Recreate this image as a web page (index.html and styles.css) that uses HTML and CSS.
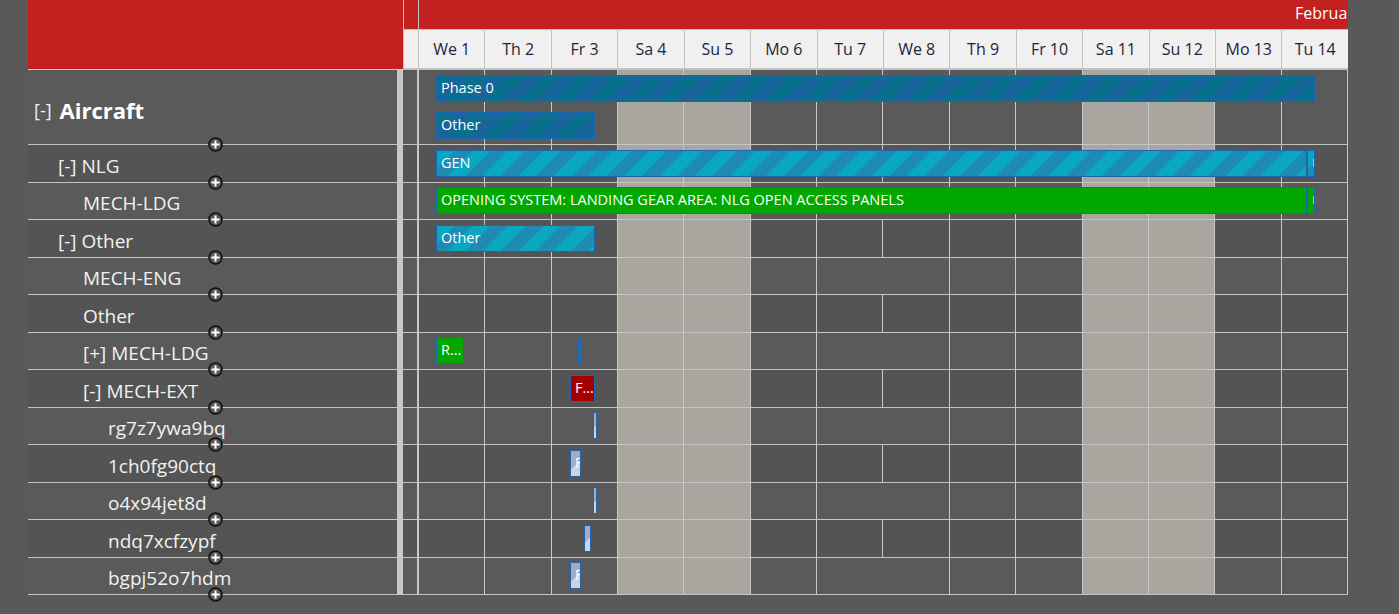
FILE: index.html
```html
<!DOCTYPE html>
<html lang="en">
<head>
<meta charset="utf-8">
<title>Gantt</title>
<link rel="stylesheet" href="styles.css">
</head>
<body>
<div class="gantt">
  <div class="header">
    <div class="hdr-left"></div>
    <div class="hdr-right">
      <div class="month-row">
        <div class="lead"></div>
        <div class="month">February</div>
      </div>
      <div class="day-row">
        <div class="lead"></div>
        <div class="days">
          <div class="day">We 1</div>
          <div class="day">Th 2</div>
          <div class="day">Fr 3</div>
          <div class="day">Sa 4</div>
          <div class="day">Su 5</div>
          <div class="day">Mo 6</div>
          <div class="day">Tu 7</div>
          <div class="day">We 8</div>
          <div class="day">Th 9</div>
          <div class="day">Fr 10</div>
          <div class="day">Sa 11</div>
          <div class="day">Su 12</div>
          <div class="day">Mo 13</div>
          <div class="day">Tu 14</div>
        </div>
      </div>
    </div>
  </div>

  <div class="body">
    <div class="tree">
      <div class="row tall lvl0"><span class="toggle">[-]</span><span class="root-name">Aircraft</span><svg class="add" viewBox="0 0 15 15"><circle cx="7.5" cy="7.5" r="6.5"/><path d="M7.5 3.5v8M3.5 7.5h8"/></svg></div>
      <div class="row alt lvl1">[-] NLG<svg class="add" viewBox="0 0 15 15"><circle cx="7.5" cy="7.5" r="6.5"/><path d="M7.5 3.5v8M3.5 7.5h8"/></svg></div>
      <div class="row lvl2">MECH-LDG<svg class="add" viewBox="0 0 15 15"><circle cx="7.5" cy="7.5" r="6.5"/><path d="M7.5 3.5v8M3.5 7.5h8"/></svg></div>
      <div class="row alt lvl1">[-] Other<svg class="add" viewBox="0 0 15 15"><circle cx="7.5" cy="7.5" r="6.5"/><path d="M7.5 3.5v8M3.5 7.5h8"/></svg></div>
      <div class="row lvl2">MECH-ENG<svg class="add" viewBox="0 0 15 15"><circle cx="7.5" cy="7.5" r="6.5"/><path d="M7.5 3.5v8M3.5 7.5h8"/></svg></div>
      <div class="row alt lvl2">Other<svg class="add" viewBox="0 0 15 15"><circle cx="7.5" cy="7.5" r="6.5"/><path d="M7.5 3.5v8M3.5 7.5h8"/></svg></div>
      <div class="row lvl2">[+] MECH-LDG<svg class="add" viewBox="0 0 15 15"><circle cx="7.5" cy="7.5" r="6.5"/><path d="M7.5 3.5v8M3.5 7.5h8"/></svg></div>
      <div class="row alt lvl2">[-] MECH-EXT<svg class="add" viewBox="0 0 15 15"><circle cx="7.5" cy="7.5" r="6.5"/><path d="M7.5 3.5v8M3.5 7.5h8"/></svg></div>
      <div class="row lvl3">rg7z7ywa9bq<svg class="add" viewBox="0 0 15 15"><circle cx="7.5" cy="7.5" r="6.5"/><path d="M7.5 3.5v8M3.5 7.5h8"/></svg></div>
      <div class="row alt lvl3">1ch0fg90ctq<svg class="add" viewBox="0 0 15 15"><circle cx="7.5" cy="7.5" r="6.5"/><path d="M7.5 3.5v8M3.5 7.5h8"/></svg></div>
      <div class="row lvl3">o4x94jet8d<svg class="add" viewBox="0 0 15 15"><circle cx="7.5" cy="7.5" r="6.5"/><path d="M7.5 3.5v8M3.5 7.5h8"/></svg></div>
      <div class="row alt lvl3">ndq7xcfzypf<svg class="add" viewBox="0 0 15 15"><circle cx="7.5" cy="7.5" r="6.5"/><path d="M7.5 3.5v8M3.5 7.5h8"/></svg></div>
      <div class="row lvl3">bgpj52o7hdm<svg class="add" viewBox="0 0 15 15"><circle cx="7.5" cy="7.5" r="6.5"/><path d="M7.5 3.5v8M3.5 7.5h8"/></svg></div>
    </div>

    <div class="splitter"></div>

    <div class="chart">
      <div class="crow tall">
        <div class="lead"></div><div class="vline"></div>
        <div class="track">
          <div class="bar phase" style="left:17px;width:879px;top:5px">Phase 0</div>
          <div class="bar phase" style="left:17px;width:159px;top:42px">Other</div>
        </div>
      </div>
      <div class="crow alt">
        <div class="lead"></div><div class="vline"></div>
        <div class="track">
          <div class="bar group" style="left:17px;width:871px">GEN</div>
          <div class="bar group tiny" style="left:888px;width:8px"><span class="mark"></span></div>
        </div>
      </div>
      <div class="crow">
        <div class="lead"></div><div class="vline"></div>
        <div class="track">
          <div class="bar green" style="left:17px;width:871px">OPENING SYSTEM: LANDING GEAR AREA: NLG OPEN ACCESS PANELS</div>
          <div class="bar green tiny" style="left:888px;width:8px"><span class="mark"></span></div>
        </div>
      </div>
      <div class="crow alt">
        <div class="lead"></div><div class="vline"></div>
        <div class="track">
          <div class="bar group" style="left:17px;width:159px">Other</div>
        </div>
      </div>
      <div class="crow">
        <div class="lead"></div><div class="vline"></div>
        <div class="track"></div>
      </div>
      <div class="crow alt">
        <div class="lead"></div><div class="vline"></div>
        <div class="track"></div>
      </div>
      <div class="crow">
        <div class="lead"></div><div class="vline"></div>
        <div class="track">
          <div class="bar green" style="left:17px;width:28px">R...</div>
          <div class="bar green thin" style="left:159px;width:3px"></div>
        </div>
      </div>
      <div class="crow alt">
        <div class="lead"></div><div class="vline"></div>
        <div class="track">
          <div class="bar red" style="left:151px;width:25px">F...</div>
        </div>
      </div>
      <div class="crow">
        <div class="lead"></div><div class="vline"></div>
        <div class="track">
          <div class="bar task tiny" style="left:174px;width:4px"></div>
        </div>
      </div>
      <div class="crow alt">
        <div class="lead"></div><div class="vline"></div>
        <div class="track">
          <div class="bar task" style="left:151px;width:11px">F</div>
        </div>
      </div>
      <div class="crow">
        <div class="lead"></div><div class="vline"></div>
        <div class="track">
          <div class="bar task tiny" style="left:174px;width:4px"></div>
        </div>
      </div>
      <div class="crow alt">
        <div class="lead"></div><div class="vline"></div>
        <div class="track">
          <div class="bar task tiny" style="left:165px;width:7px"></div>
        </div>
      </div>
      <div class="crow">
        <div class="lead"></div><div class="vline"></div>
        <div class="track">
          <div class="bar task" style="left:151px;width:11px">F</div>
        </div>
      </div>
    </div>
  </div>
</div>
</body>
</html>
```

FILE: styles.css
```css
* {
  box-sizing: border-box;
}

html,
body {
  margin: 0;
  padding: 0;
}

body {
  background: #595959;
  font-family: "Open Sans", "Noto Sans", "DejaVu Sans", sans-serif;
  width: 1399px;
  height: 614px;
  overflow: hidden;
}

.gantt {
  margin-left: 28px;
  width: 1320px;
}

/* ---------- header ---------- */
.header {
  display: flex;
  height: 69px;
}

.hdr-left {
  width: 375px;
  background: #c42020;
}

.hdr-right {
  width: 945px;
  display: flex;
  flex-direction: column;
  background: #c3c3c3;
  padding: 0 0 1px 1px;
}

.month-row {
  display: flex;
  height: 29px;
  gap: 1px;
}

.month-row .lead {
  width: 14px;
  background: #c42020;
}

.month {
  flex: 1;
  background: #c42020;
  color: #ffffff;
  font-size: 16px;
  line-height: 26px;
  padding-left: 876px;
  white-space: nowrap;
  overflow: hidden;
}

.day-row {
  display: flex;
  height: 38px;
  margin-top: 1px;
  gap: 1px;
}

.day-row .lead {
  width: 14px;
  background: #f0f0f0;
}

.days {
  flex: 1;
  display: flex;
  gap: 1px;
}

.day {
  flex: 1;
  background: #f0f0f0;
  color: #1f1f3d;
  font-size: 16px;
  display: flex;
  align-items: center;
  justify-content: center;
  white-space: nowrap;
}

/* ---------- body ---------- */
.body {
  display: flex;
}

.tree {
  width: 369px;
  border-top: 1px solid #ddcaca;
}

.splitter {
  width: 6px;
  background: #c8c8c8;
}

.chart {
  width: 945px;
  border-top: 1px solid #c3c3c3;
}

/* tree rows */
.row {
  position: relative;
  height: 37.5px;
  border-bottom: 1px solid #c4c4c4;
  background: #5a5a5a;
  display: flex;
  align-items: center;
  padding-top: 5px;
  color: #f2f2f2;
  font-size: 19px;
  white-space: nowrap;
}

.row.alt {
  background: #545454;
}

.row.tall {
  height: 75px;
  padding-top: 6px;
}

.lvl0 { padding-left: 6px; }
.lvl1 { padding-left: 30px; }
.lvl2 { padding-left: 55px; }
.lvl3 { padding-left: 80px; }

.toggle {
  font-size: 18px;
  margin-right: 8px;
}

.root-name {
  font-size: 22px;
  font-weight: 700;
  color: #ffffff;
}

.add {
  position: absolute;
  left: 180px;
  bottom: -8px;
  width: 15px;
  height: 15px;
  z-index: 2;
}

.add circle {
  fill: #575757;
  stroke: #111111;
  stroke-width: 1.5;
}

.add path {
  stroke: #ffffff;
  stroke-width: 2;
  fill: none;
}

/* chart rows */
.crow {
  display: flex;
  height: 37.5px;
  border-bottom: 1px solid #c4c4c4;
  background: #5a5a5a;
}

.crow.alt {
  background: #545454;
}

.crow.tall {
  height: 75px;
}

.crow .lead {
  width: 14px;
}

.crow .vline {
  width: 2px;
  background: #c8c8c8;
}

.track {
  flex: 1;
  position: relative;
  background-image:
    repeating-linear-gradient(to right, transparent 0 calc(100% / 14 - 1px), #c8c8c8 calc(100% / 14 - 1px) calc(100% / 14)),
    linear-gradient(to right, transparent 21.4286%, #a9a69f 21.4286% 35.7143%, transparent 35.7143% 71.4286%, #a9a69f 71.4286% 85.7143%, transparent 85.7143%);
}

/* bars */
.bar {
  position: absolute;
  top: 4.5px;
  height: 27px;
  border: 1px solid #1a66b4;
  color: #ffffff;
  font-size: 14.5px;
  line-height: 24px;
  padding-left: 4px;
  white-space: nowrap;
  overflow: hidden;
}

.bar.tiny {
  padding-left: 0;
}

.bar.thin {
  padding-left: 0;
  border-width: 1px 0.5px;
}

.bar.phase {
  background: repeating-linear-gradient(135deg, #08708c 0 12.5px, #17659a 12.5px 25px);
}

.bar.group {
  background: repeating-linear-gradient(135deg, #0aa7c1 0 12.5px, #1e8bb5 12.5px 25px);
}

.bar.green {
  background: #00a800;
}

.bar.red {
  background: #a30000;
}

.bar.task {
  background: linear-gradient(135deg, #a9a9c4 55%, #d3d3d3 55%);
}

.mark {
  display: block;
  width: 1px;
  height: 8px;
  margin: 8px 0 0 5px;
  background: #7fd0f0;
}
```
